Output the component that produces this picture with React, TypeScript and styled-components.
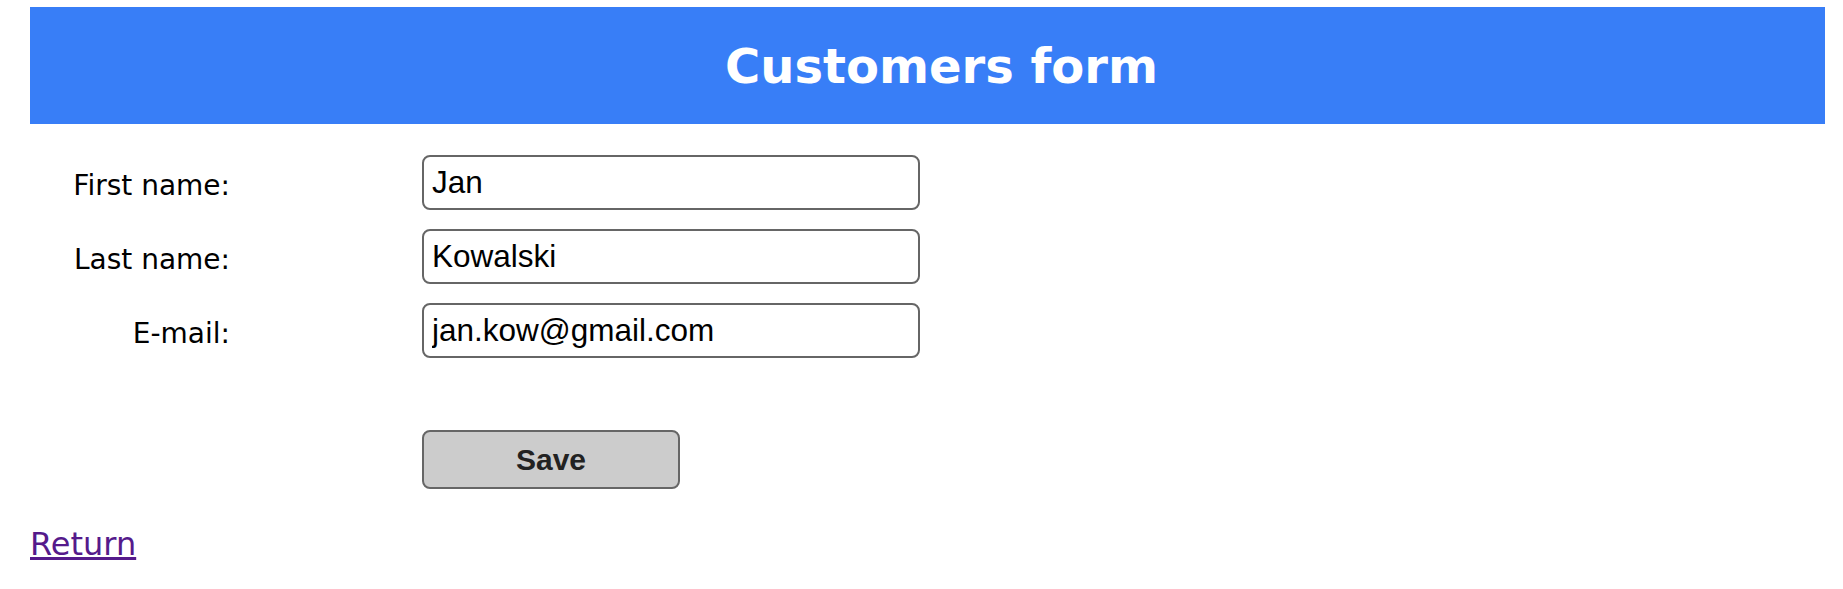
import React from "react";
import styled, { createGlobalStyle } from "styled-components";

const GlobalStyle = createGlobalStyle`
  html, body {
    margin: 0;
    padding: 0;
    background: #ffffff;
  }
  body {
    font-family: "DejaVu Sans", Verdana, sans-serif;
    color: #000;
  }
`;

const Page = styled.div`
  padding: 7px 18px 0 30px;
`;

const Header = styled.header`
  height: 117px;
  background: #387ef7;
  display: flex;
  align-items: center;
  justify-content: center;
  padding-left: 28px;
`;

const Title = styled.h1`
  margin: 0;
  font-family: "DejaVu Sans", Verdana, sans-serif;
  font-weight: bold;
  font-size: 48px;
  color: #ffffff;
`;

const Form = styled.form`
  display: grid;
  grid-template-columns: 200px 498px;
  column-gap: 192px;
  row-gap: 19px;
  margin-top: 31px;
  align-items: center;
`;

const Label = styled.label`
  text-align: right;
  font-family: "DejaVu Sans", Verdana, sans-serif;
  font-size: 28px;
  padding-top: 5px;
`;

const Input = styled.input`
  box-sizing: border-box;
  width: 498px;
  height: 55px;
  border: 2px solid #666666;
  border-radius: 8px;
  padding: 0 8px;
  font-family: "Liberation Sans", Arial, sans-serif;
  font-size: 31.5px;
  color: #000;
  background: #fff;
  outline: none;
`;

const Spacer = styled.div``;

const SaveButton = styled.button`
  box-sizing: border-box;
  width: 258px;
  height: 59px;
  margin-top: 53px;
  background: #cccccc;
  border: 2px solid #666666;
  border-radius: 8px;
  font-family: "Liberation Sans", Arial, sans-serif;
  font-weight: bold;
  font-size: 30px;
  color: #222222;
  cursor: pointer;
`;

const ReturnLink = styled.a`
  display: inline-block;
  margin-top: 36px;
  font-family: "DejaVu Sans", Verdana, sans-serif;
  font-size: 32px;
  color: #551a8b;
  text-decoration: underline;
`;

const fields = [
  { id: "first", label: "First name:", value: "Jan", type: "text" },
  { id: "last", label: "Last name:", value: "Kowalski", type: "text" },
  { id: "email", label: "E-mail:", value: "jan.kow@gmail.com", type: "email" },
];

export default function App() {
  return (
    <>
      <GlobalStyle />
      <Page>
        <Header>
          <Title>Customers form</Title>
        </Header>
        <Form onSubmit={(e) => e.preventDefault()}>
          {fields.map((f) => (
            <React.Fragment key={f.id}>
              <Label htmlFor={f.id}>{f.label}</Label>
              <Input id={f.id} type={f.type} defaultValue={f.value} />
            </React.Fragment>
          ))}
          <Spacer />
          <div>
            <SaveButton type="submit">Save</SaveButton>
          </div>
        </Form>
        <ReturnLink href="#">Return</ReturnLink>
      </Page>
    </>
  );
}
